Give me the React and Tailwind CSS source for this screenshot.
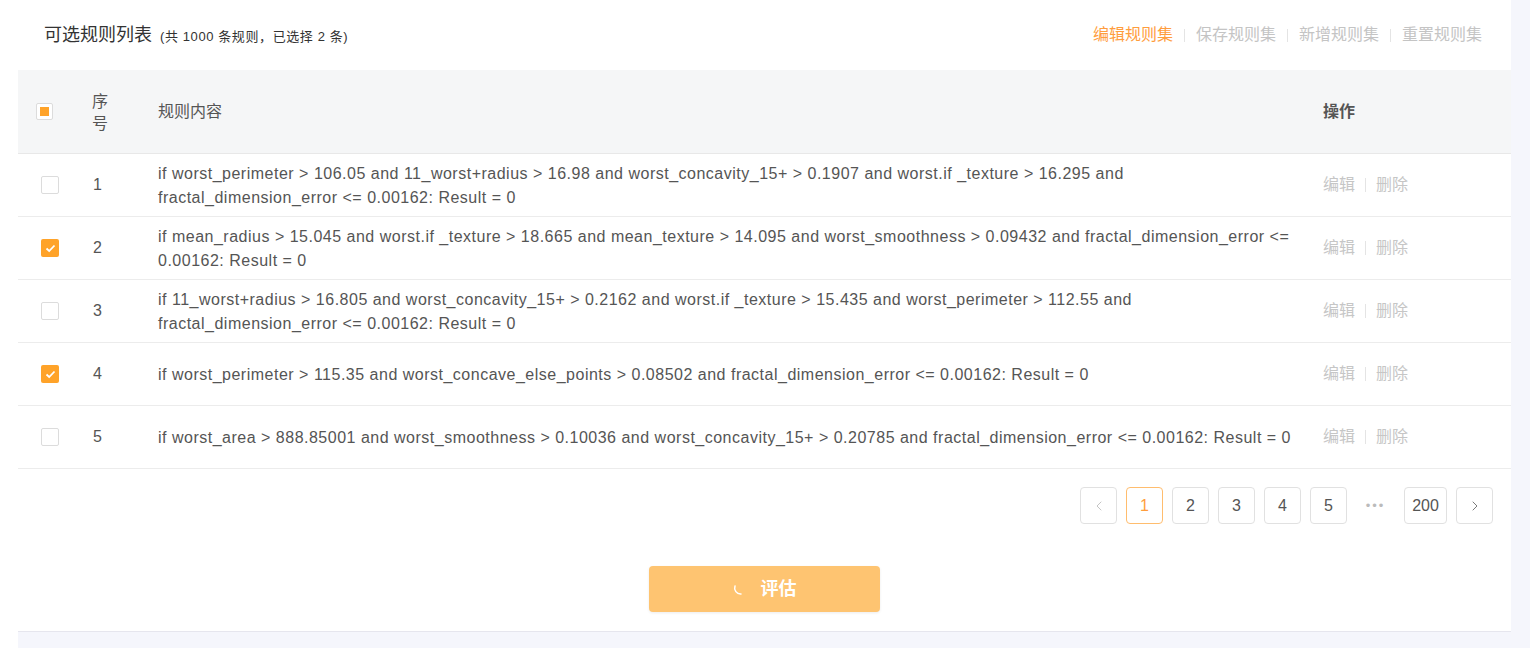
import { ChevronLeft, ChevronRight } from "lucide-react";

const rules = [
  {
    id: 1,
    checked: false,
    text: "if worst_perimeter > 106.05 and 11_worst+radius > 16.98 and worst_concavity_15+ > 0.1907 and worst.if _texture > 16.295 and fractal_dimension_error <= 0.00162: Result = 0",
  },
  {
    id: 2,
    checked: true,
    text: "if mean_radius > 15.045 and worst.if _texture > 18.665 and mean_texture > 14.095 and worst_smoothness > 0.09432 and fractal_dimension_error <= 0.00162: Result = 0",
  },
  {
    id: 3,
    checked: false,
    text: "if 11_worst+radius > 16.805 and worst_concavity_15+ > 0.2162 and worst.if _texture > 15.435 and worst_perimeter > 112.55 and fractal_dimension_error <= 0.00162: Result = 0",
  },
  {
    id: 4,
    checked: true,
    text: "if worst_perimeter > 115.35 and worst_concave_else_points > 0.08502 and fractal_dimension_error <= 0.00162: Result = 0",
  },
  {
    id: 5,
    checked: false,
    text: "if worst_area > 888.85001 and worst_smoothness > 0.10036 and worst_concavity_15+ > 0.20785 and fractal_dimension_error <= 0.00162: Result = 0",
  },
];

function Checkbox({ checked }) {
  if (checked) {
    return (
      <span className="flex h-[18px] w-[18px] items-center justify-center rounded-[2px] bg-[#ffa329]">
        <svg width="11" height="9" viewBox="0 0 11 9" fill="none">
          <path d="M1.5 4.5 L4.2 7 L9.5 1.5" stroke="white" strokeWidth="1.8" />
        </svg>
      </span>
    );
  }
  return <span className="block h-[18px] w-[18px] rounded-[2px] border border-[#dcdcdc] bg-white" />;
}

function PageBtn({ children, active, wide }) {
  return (
    <button
      className={
        "flex h-[37px] items-center justify-center rounded-[4px] border bg-white text-[16px] " +
        (wide ? "w-[43px] " : "w-[37px] ") +
        (active ? "border-[#ffbd6e] text-[#ff9d3d]" : "border-[#e1e1e1] text-[#555]")
      }
    >
      {children}
    </button>
  );
}

export default function App() {
  return (
    <div className="h-[656px] w-full bg-white font-['Liberation_Sans','Noto_Sans_CJK_SC',sans-serif]">
      <div className="ml-[18px] mr-[8px] h-[648px] bg-[#f5f6fc]">
        <div className="mr-[19px] flex h-[632px] flex-col border-b border-[#e6e6ee] bg-white">
          {/* 顶部标题 */}
          <div className="flex h-[70px] items-center justify-between pl-[26px] pr-[29px]">
            <div className="flex items-baseline">
              <span className="text-[18px] text-[#333]">可选规则列表</span>
              <span className="ml-[8px] text-[13px] tracking-[0.6px] text-[#333]">(共 1000 条规则，已选择 2 条)</span>
            </div>
            <div className="flex items-center text-[16px] text-[#c4c4c4]">
              <span className="text-[#ff9d3d]">编辑规则集</span>
              <span className="mx-[11px] h-[13px] w-px bg-[#e4e4e4]" />
              <span>保存规则集</span>
              <span className="mx-[11px] h-[13px] w-px bg-[#e4e4e4]" />
              <span>新增规则集</span>
              <span className="mx-[11px] h-[13px] w-px bg-[#e4e4e4]" />
              <span>重置规则集</span>
            </div>
          </div>

          {/* 表头 */}
          <div className="grid h-[84px] grid-cols-[57px_65px_1165px_1fr] items-center border-b border-[#e8e8e8] bg-[#f5f6f7] text-[16px] text-[#555]">
            <div className="pl-[18px]">
              <span className="flex h-[17px] w-[17px] items-center justify-center rounded-[2px] border border-[#dcdcdc] bg-white">
                <span className="h-[9px] w-[9px] bg-[#ffa329]" />
              </span>
            </div>
            <div className="pl-[17px] pt-[2px] leading-[22px]">
              序<br />号
            </div>
            <div className="pl-[18px]">规则内容</div>
            <div className="pl-[18px] font-bold">操作</div>
          </div>

          {/* 规则行 */}
          {rules.map((r) => (
            <div
              key={r.id}
              className="grid h-[63px] grid-cols-[57px_65px_1165px_1fr] items-center border-b border-[#ececec] text-[16px] text-[#555]"
            >
              <div className="pl-[23px]">
                <Checkbox checked={r.checked} />
              </div>
              <div className="pl-[18px]">{r.id}</div>
              <div className="pl-[18px] pr-[8px] pt-[1px] leading-[24px] tracking-[0.5px]">{r.text}</div>
              <div className="flex items-center pl-[18px] text-[16px] text-[#c6c6c6]">
                <span>编辑</span>
                <span className="mx-[10px] h-[14px] w-px bg-[#e4e4e4]" />
                <span>删除</span>
              </div>
            </div>
          ))}

          {/* 分页 */}
          <div className="flex justify-end gap-[9px] pr-[18px] pt-[18px]">
            <PageBtn>
              <ChevronLeft size={16} strokeWidth={1.3} className="text-[#bbb]" />
            </PageBtn>
            <PageBtn active>1</PageBtn>
            <PageBtn>2</PageBtn>
            <PageBtn>3</PageBtn>
            <PageBtn>4</PageBtn>
            <PageBtn>5</PageBtn>
            <span className="flex w-[39px] items-center justify-center text-[13px] tracking-[2px] text-[#bbb]">•••</span>
            <PageBtn wide>200</PageBtn>
            <PageBtn>
              <ChevronRight size={16} strokeWidth={1.3} className="text-[#666]" />
            </PageBtn>
          </div>

          {/* 评估按钮 */}
          <div className="flex justify-center pt-[42px]">
            <button className="flex h-[46px] w-[231px] items-center justify-center gap-[14px] rounded-[4px] bg-[#fec471] text-[18px] font-bold text-white shadow-[0_1px_3px_rgba(0,0,0,0.08)]">
              <svg width="14" height="14" viewBox="0 0 14 14" fill="none">
                <path d="M2 4 A6 6 0 0 0 8 12" stroke="white" strokeWidth="1.5" strokeLinecap="round" />
              </svg>
              评估
            </button>
          </div>
        </div>
      </div>
    </div>
  );
}
